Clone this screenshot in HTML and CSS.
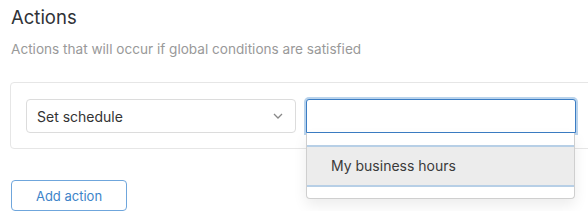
FILE: index.html
```html
<!DOCTYPE html>
<html lang="en">
<head>
  <meta charset="UTF-8">
  <title>Actions</title>
  <link rel="stylesheet" href="styles.css">
</head>
<body>
  <h2 class="title">Actions</h2>
  <p class="subtitle">Actions that will occur if global conditions are satisfied</p>
  <div class="card">
    <div class="row">
      <div class="select">
        <span>Set schedule</span>
        <svg class="chevron" width="10" height="6" viewBox="0 0 10 6"><path d="M1 1l4 4 4-4" fill="none" stroke="#888" stroke-width="1.3"/></svg>
      </div>
      <div class="combo">
        <input class="search" type="text">
        <div class="menu">
          <div class="option">My business hours</div>
        </div>
      </div>
    </div>
  </div>
  <button class="add">Add action</button>
</body>
</html>
```

FILE: styles.css
```css
html {
  overflow: hidden;
}
body {
  margin: 0;
  padding: 0 0 0 10px;
  font-family: Inter, "Liberation Sans", sans-serif;
  color: #333;
  background: #fff;
}
.title {
  font-size: 18.5px;
  font-weight: 400;
  margin: 5px 0 0 1px;
  line-height: 24px;
  color: #2f3237;
}
.subtitle {
  font-size: 13.6px;
  color: #999;
  margin: 11px 0 0 1px;
  line-height: 18px;
}
.card {
  margin-top: 24px;
  margin-right: -30px;
  border: 1px solid #e6e6e6;
  border-radius: 4px;
  padding: 16px 15px 15px 15px;
}
.row {
  display: flex;
  gap: 10px;
}
.select {
  border: 1px solid #dcdcdc;
  border-radius: 4px;
  display: flex;
  align-items: center;
  justify-content: space-between;
  padding: 0 12px 0 10px;
  box-sizing: border-box;
  width: 270px;
  height: 34px;
  font-size: 14px;
}
.combo {
  position: relative;
  width: 270px;
  height: 34px;
}
.search {
  display: block;
  width: 100%;
  height: 34px;
  box-sizing: border-box;
  border: 1px solid #3b7dc4;
  border-radius: 3px 3px 0 0;
  box-shadow: 0 0 0 2px #b9d3ec;
  margin: 0;
  outline: none;
}
.menu {
  position: absolute;
  top: 34px;
  left: 0;
  right: 1px;
  height: 66px;
  box-sizing: border-box;
  border: 1px solid #cfcfcf;
  border-top: none;
  border-radius: 0 0 4px 4px;
  background: #fff;
  padding-top: 12px;
  box-shadow: 0 6px 14px rgba(0, 0, 0, 0.08);
}
.option {
  height: 42px;
  box-sizing: border-box;
  background: #ececec;
  border-top: 2px solid #b7cfe6;
  border-bottom: 2px solid #b7cfe6;
  font-size: 14px;
  line-height: 38px;
  padding-left: 24px;
  color: #3a3a3a;
}
.add {
  margin-top: 31px;
  margin-left: 1px;
  width: 116px;
  height: 31px;
  background: #fff;
  border: 1px solid #6fa6dc;
  border-radius: 4px;
  color: #3d84c9;
  font-family: Inter, "Liberation Sans", sans-serif;
  font-size: 13px;
  cursor: pointer;
}
```
